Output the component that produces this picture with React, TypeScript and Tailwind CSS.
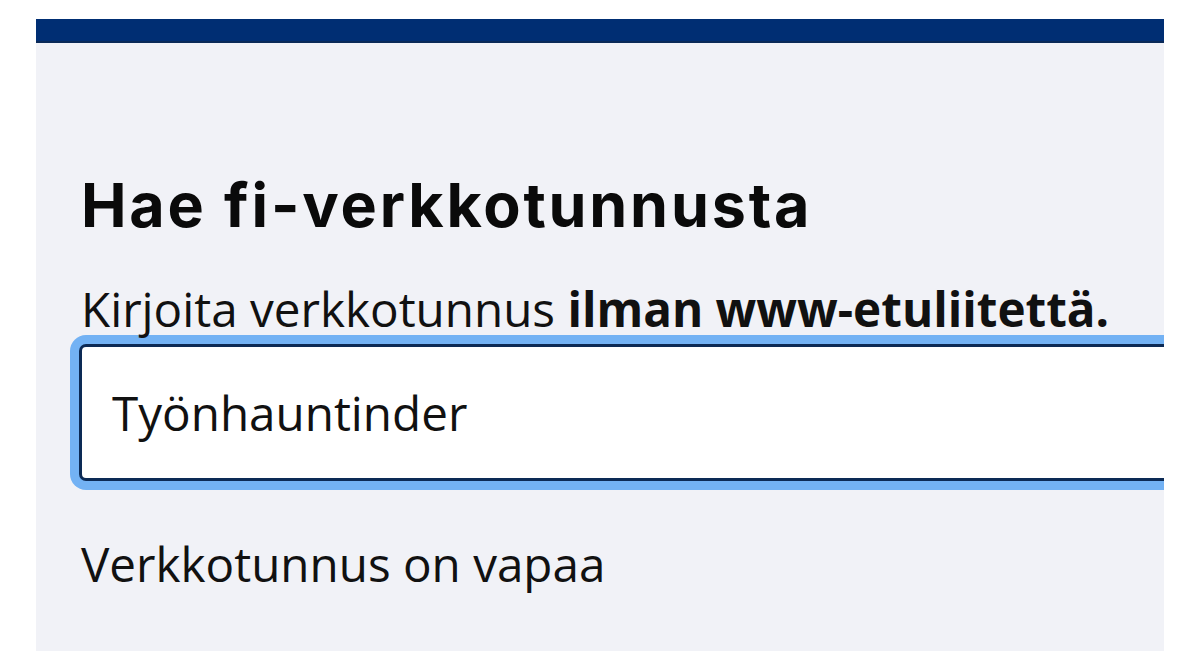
import React from 'react';

const App: React.FC = () => {
    return (
        <div className="w-[1200px] h-[651px] bg-white overflow-hidden">
            <div className="ml-[36px] mt-[19px] w-[1128px] h-[632px] bg-[#f1f2f7] overflow-hidden flex flex-col">
                {/* Top bar */}
                <div className="h-[24px] bg-[#002e73] border-b-2 border-[#0a2a58] shrink-0" />

                {/* Content */}
                <div className="pl-[45px] pt-[126px]">
                    <h1 className="text-[61px] leading-[72px] font-bold text-[#0a0a0a] font-['Inter','Noto_Sans',sans-serif] tracking-[2.8px]">
                        Hae fi-verkkotunnusta
                    </h1>

                    <p className="mt-[42px] text-[47.6px] leading-[52px] text-[#111] font-['Open_Sans',sans-serif]">
                        Kirjoita verkkotunnus <span className="font-bold">ilman www-etuliitettä.</span>
                    </p>

                    <div className="-ml-[11px] w-[1140px] h-[155px] rounded-[16px] bg-[#73b2f4] p-[9px]">
                        <div className="h-full rounded-[7px] border-[3px] border-[#0c2a55] bg-white flex items-center pl-[30px]">
                            <span className="text-[47.6px] text-[#111] font-['Open_Sans',sans-serif]">Työnhauntinder</span>
                        </div>
                    </div>

                    <p className="mt-[48px] text-[47.6px] leading-[52px] text-[#111] font-['Open_Sans',sans-serif]">
                        Verkkotunnus on vapaa
                    </p>
                </div>
            </div>
        </div>
    );
};

export default App;
